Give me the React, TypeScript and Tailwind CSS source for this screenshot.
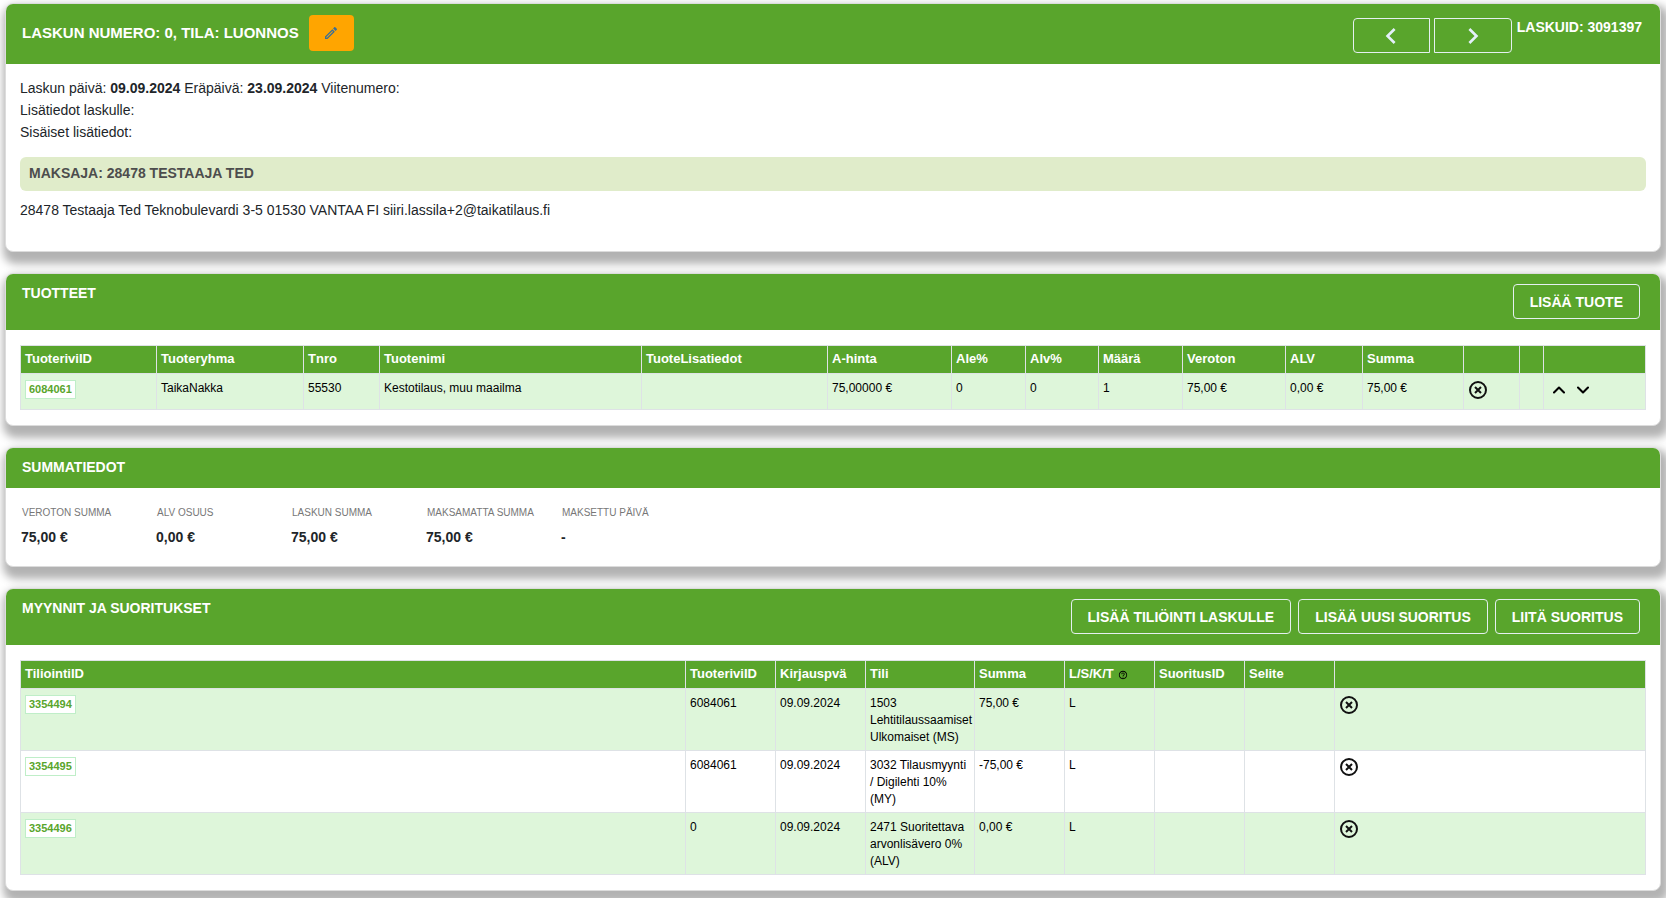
import type { ReactNode } from 'react';
import { ChevronDown, ChevronUp } from 'lucide-react';
import { MdChevronLeft, MdChevronRight, MdHelpOutline, MdOutlineEdit } from 'react-icons/md';

const productColumns = [
  { label: 'TuoteriviID', width: 136 },
  { label: 'Tuoteryhma', width: 147 },
  { label: 'Tnro', width: 76 },
  { label: 'Tuotenimi', width: 262 },
  { label: 'TuoteLisatiedot', width: 186 },
  { label: 'A-hinta', width: 124 },
  { label: 'Ale%', width: 74 },
  { label: 'Alv%', width: 73 },
  { label: 'Määrä', width: 84 },
  { label: 'Veroton', width: 103 },
  { label: 'ALV', width: 77 },
  { label: 'Summa', width: 101 },
  { label: '', width: 56 },
  { label: '', width: 24 },
  { label: '', width: 102 },
];

const products = [
  {
    id: '6084061',
    cells: ['TaikaNakka', '55530', 'Kestotilaus, muu maailma', '', '75,00000 €', '0', '0', '1', '75,00 €', '0,00 €', '75,00 €'],
  },
];

const summary = [
  { label: 'VEROTON SUMMA', value: '75,00 €' },
  { label: 'ALV OSUUS', value: '0,00 €' },
  { label: 'LASKUN SUMMA', value: '75,00 €' },
  { label: 'MAKSAMATTA SUMMA', value: '75,00 €' },
  { label: 'MAKSETTU PÄIVÄ', value: '-' },
];

const entryColumns = [
  { label: 'TiliointiID', width: 665 },
  { label: 'TuoteriviID', width: 90 },
  { label: 'Kirjauspvä', width: 90 },
  { label: 'Tili', width: 109 },
  { label: 'Summa', width: 90 },
  { label: 'L/S/K/T', width: 90, help: true },
  { label: 'SuoritusID', width: 90 },
  { label: 'Selite', width: 90 },
  { label: '', width: 311 },
];

const entries = [
  { id: '3354494', cells: ['6084061', '09.09.2024', '1503 Lehtitilaussaamiset Ulkomaiset (MS)', '75,00 €', 'L', '', ''] },
  { id: '3354495', cells: ['6084061', '09.09.2024', '3032 Tilausmyynti / Digilehti 10% (MY)', '-75,00 €', 'L', '', ''] },
  { id: '3354496', cells: ['0', '09.09.2024', '2471 Suoritettava arvonlisävero 0% (ALV)', '0,00 €', 'L', '', ''] },
];

type Column = { label: string; width: number; help?: boolean };

function Card({ children }: { children: ReactNode }) {
  return (
    <section className="overflow-clip rounded-lg border border-[#dcdcdc] bg-white shadow-[3px_7px_8px_5px_rgba(0,0,0,0.3)]">
      {children}
    </section>
  );
}

function CardHeader({ title, children }: { title: string; children?: ReactNode }) {
  return (
    <header className="flex min-h-10 items-start justify-between bg-[#59a52c] pt-2.5 pr-5 pb-[11px] pl-4">
      <h2 className="text-sm leading-[18px] font-bold text-white">{title}</h2>
      {children}
    </header>
  );
}

function OutlineButton({ children }: { children: ReactNode }) {
  return (
    <button type="button" className="h-[35px] rounded border border-[#e4f0f0] px-4 text-sm font-bold text-white">
      {children}
    </button>
  );
}

function RemoveButton() {
  return (
    <button type="button" aria-label="Poista" className="block">
      <svg width="20" height="20" viewBox="0 0 20 20" fill="none" stroke="#111" strokeWidth="2">
        <circle cx="10" cy="10" r="8" />
        <path d="M7 7l6 6M13 7l-6 6" />
      </svg>
    </button>
  );
}

function IdLink({ id }: { id: string }) {
  return (
    <a href={`#${id}`} className="block w-fit border border-[#bfeec8] bg-white px-[3px] text-[11px] leading-[17px] font-bold text-[#59a52c]">
      {id}
    </a>
  );
}

function TableHead({ columns }: { columns: Column[] }) {
  return (
    <>
      <colgroup>
        {columns.map((column, index) => (
          <col key={index} style={{ width: column.width }} />
        ))}
      </colgroup>
      <thead>
        <tr className="bg-[#59a52c] text-left align-top text-[13px] leading-[18px] text-white">
          {columns.map((column, index) => (
            <th key={index} className="h-7 border border-[#dee2e6] px-1 pt-1 font-bold whitespace-nowrap">
              {column.label}
              {column.help && <MdHelpOutline size={10} className="ml-1 inline text-black" />}
            </th>
          ))}
        </tr>
      </thead>
    </>
  );
}

export default function App() {
  return (
    <main className="flex flex-col gap-[21px] overflow-x-clip px-[5px] pt-[3px] pb-[7px] font-['Liberation_Sans',Arial,sans-serif] text-sm text-[#212529]">
      <Card>
        <header className="flex items-start justify-between bg-[#59a52c] py-[11px] pr-[18px] pl-4 font-bold text-white">
          <div className="flex items-center gap-2.5">
            <h1 className="text-[15px] leading-5">LASKUN NUMERO: 0, TILA: LUONNOS</h1>
            <button type="button" aria-label="Muokkaa" className="flex h-9 w-[45px] items-center justify-center rounded bg-[#ffa500] text-[#3a6f96]">
              <MdOutlineEdit size={16} />
            </button>
          </div>
          <div className="flex items-start gap-1 pt-[3px]">
            <button type="button" aria-label="Edellinen" className="flex h-[35px] w-[77px] items-center justify-center rounded-l border border-[#e4f0f0] text-[#e4f0fa]">
              <MdChevronLeft size={32} />
            </button>
            <button type="button" aria-label="Seuraava" className="flex h-[35px] w-[78px] items-center justify-center rounded-r border border-[#e4f0f0] text-[#e4f0fa]">
              <MdChevronRight size={32} />
            </button>
            <span className="pl-px leading-[18px]">LASKUID: 3091397</span>
          </div>
        </header>
        <div className="px-3.5 pt-[13px] pb-[30px]">
          <div className="leading-[22px]">
            <p>
              Laskun päivä: <b>09.09.2024</b> Eräpäivä: <b>23.09.2024</b> Viitenumero:
            </p>
            <p>Lisätiedot laskulle:</p>
            <p>Sisäiset lisätiedot:</p>
          </div>
          <h2 className="mt-3.5 rounded-md bg-[#e0ecca] px-[9px] pt-[5px] pb-[7px] leading-[22px] font-bold text-[#4d4d4d]">
            MAKSAJA: 28478 TESTAAJA TED
          </h2>
          <p className="mt-2 leading-[22px]">
            28478 Testaaja Ted Teknobulevardi 3-5 01530 VANTAA FI siiri.lassila+2@taikatilaus.fi
          </p>
        </div>
      </Card>

      <Card>
        <CardHeader title="TUOTTEET">
          <OutlineButton>LISÄÄ TUOTE</OutlineButton>
        </CardHeader>
        <div className="px-3.5 py-[15px]">
          <table className="w-full table-fixed border-collapse text-xs text-black">
            <TableHead columns={productColumns} />
            <tbody>
              {products.map((product) => (
                <tr key={product.id} className="h-9 bg-[#def6da] align-top leading-[17px]">
                  <td className="border border-[#dee2e6] px-1 pt-1.5">
                    <IdLink id={product.id} />
                  </td>
                  {product.cells.map((cell, index) => (
                    <td key={index} className="border border-[#dee2e6] px-1 pt-1.5">{cell}</td>
                  ))}
                  <td className="border border-[#dee2e6] px-1 pt-1.5">
                    <RemoveButton />
                  </td>
                  <td className="border border-[#dee2e6]" />
                  <td className="border border-[#dee2e6] px-[5px] pt-1.5">
                    <div className="flex gap-1">
                      <button type="button" aria-label="Siirrä ylös">
                        <ChevronUp size={20} strokeWidth={2.5} />
                      </button>
                      <button type="button" aria-label="Siirrä alas">
                        <ChevronDown size={20} strokeWidth={2.5} />
                      </button>
                    </div>
                  </td>
                </tr>
              ))}
            </tbody>
          </table>
        </div>
      </Card>

      <Card>
        <CardHeader title="SUMMATIEDOT" />
        <dl className="flex px-[15px] pt-[17px] pb-[19px]">
          {summary.map((item) => (
            <div key={item.label} className="w-[135px]">
              <dt className="px-px text-[10px] leading-4 text-[#777]">{item.label}</dt>
              <dd className="mt-1.5 leading-5 font-bold">{item.value}</dd>
            </div>
          ))}
        </dl>
      </Card>

      <Card>
        <CardHeader title="MYYNNIT JA SUORITUKSET">
          <div className="flex gap-[7px]">
            <OutlineButton>LISÄÄ TILIÖINTI LASKULLE</OutlineButton>
            <OutlineButton>LISÄÄ UUSI SUORITUS</OutlineButton>
            <OutlineButton>LIITÄ SUORITUS</OutlineButton>
          </div>
        </CardHeader>
        <div className="px-3.5 py-[15px]">
          <table className="w-full table-fixed border-collapse text-xs text-black">
            <TableHead columns={entryColumns} />
            <tbody>
              {entries.map((entry) => (
                <tr key={entry.id} className="h-[62px] align-top leading-[17px] odd:bg-[#def6da]">
                  <td className="border border-[#dee2e6] px-1 pt-1.5">
                    <IdLink id={entry.id} />
                  </td>
                  {entry.cells.map((cell, index) => (
                    <td key={index} className="border border-[#dee2e6] px-1 pt-1.5">{cell}</td>
                  ))}
                  <td className="border border-[#dee2e6] px-1 pt-1.5">
                    <RemoveButton />
                  </td>
                </tr>
              ))}
            </tbody>
          </table>
        </div>
      </Card>
    </main>
  );
}
